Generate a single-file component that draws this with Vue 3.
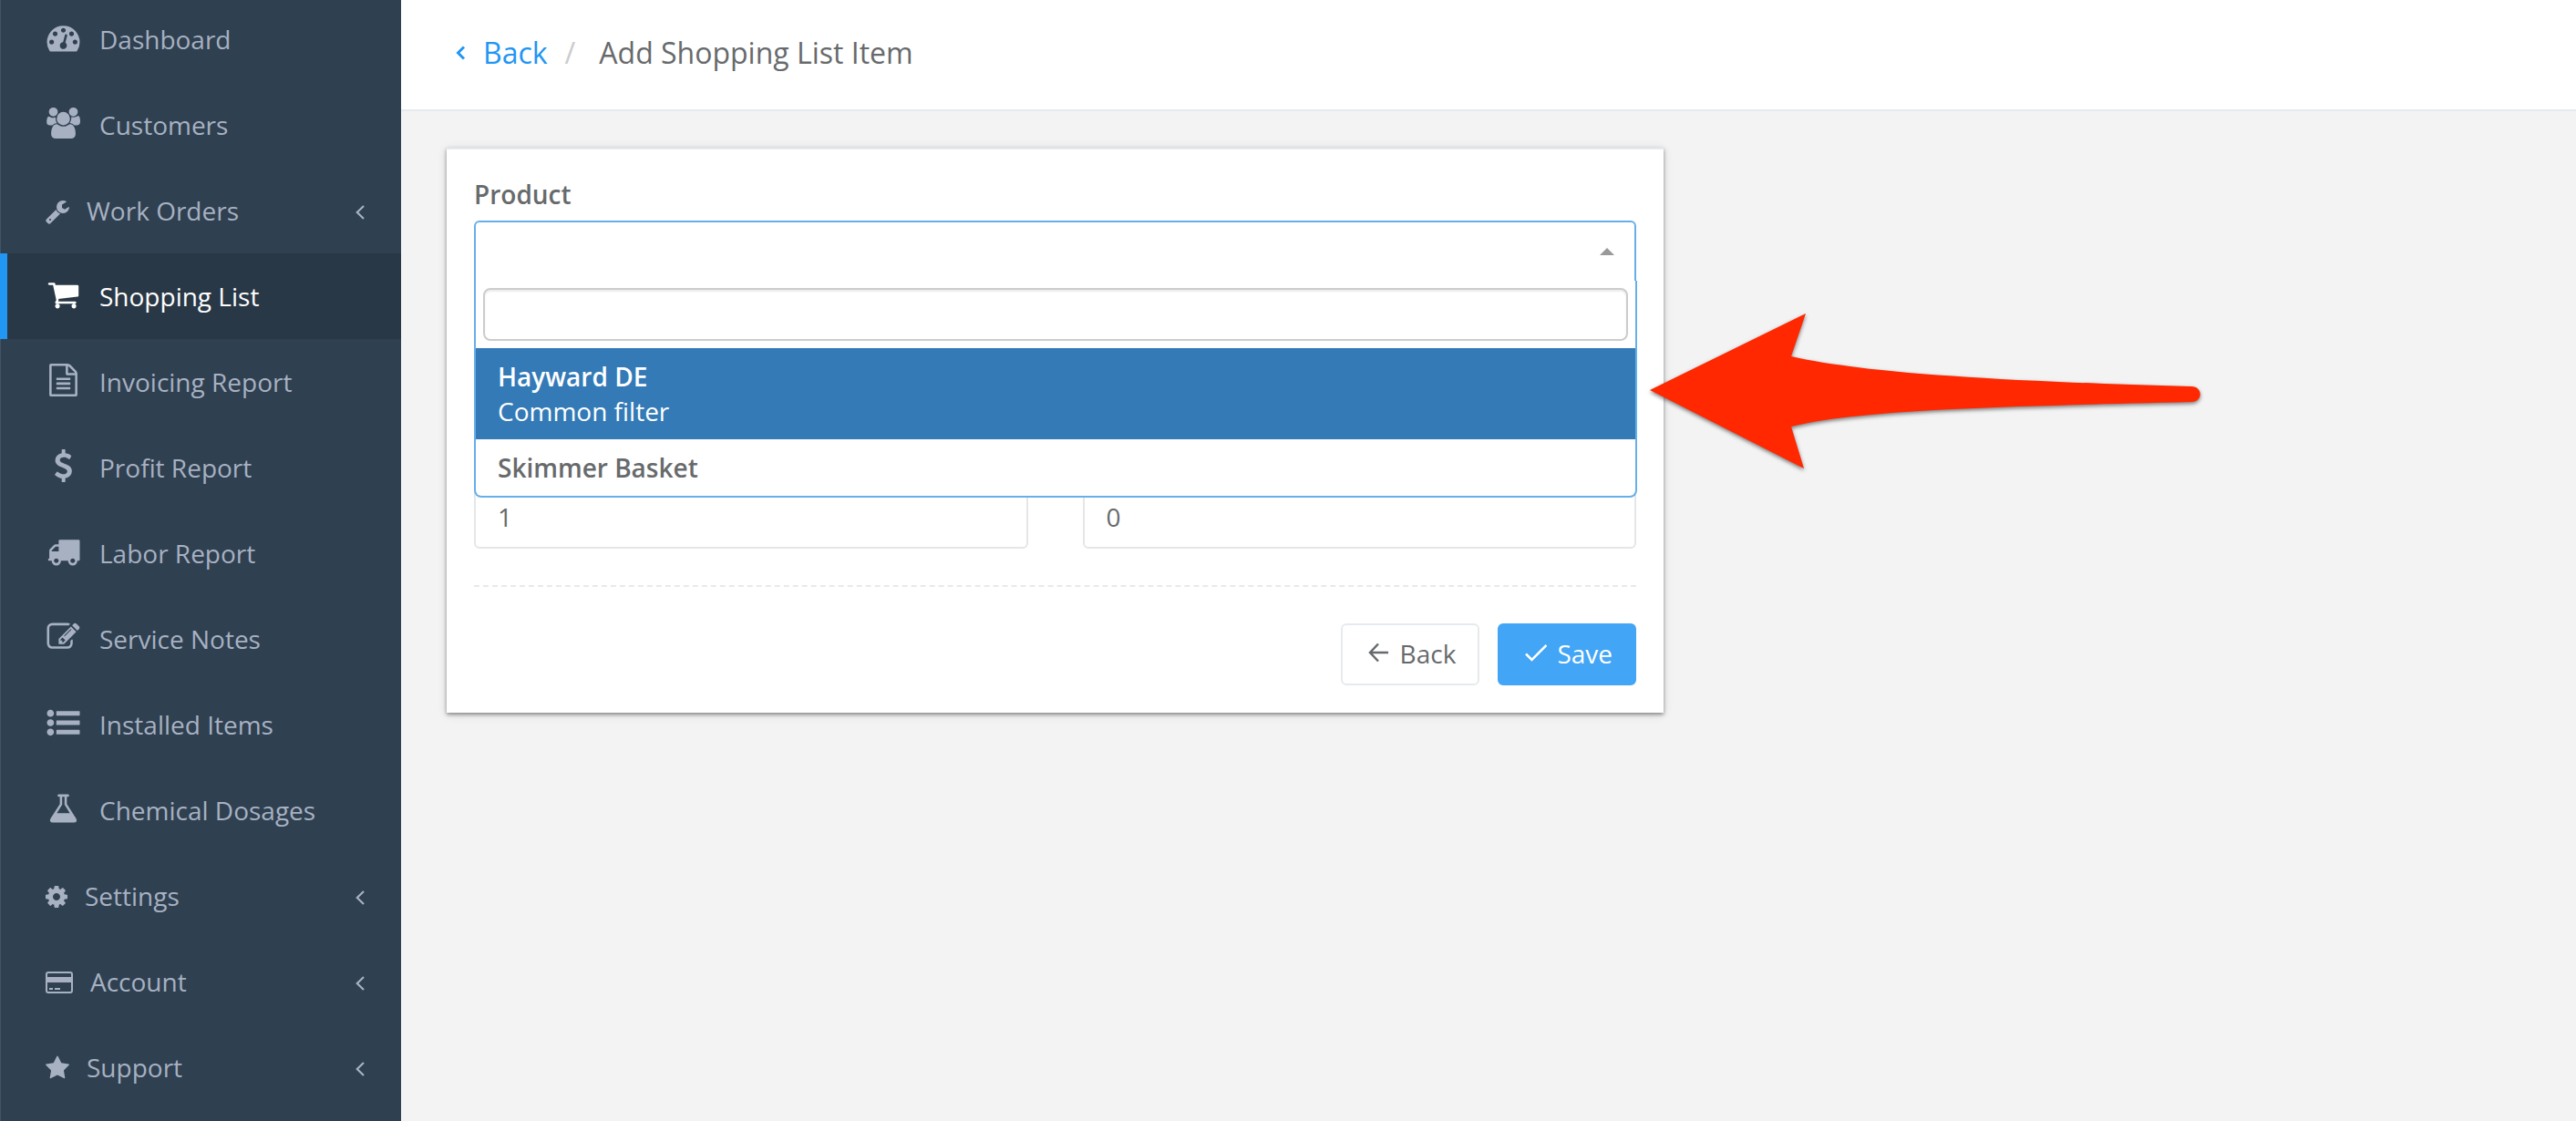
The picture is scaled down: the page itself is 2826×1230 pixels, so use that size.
<template>
  <div class="app">
    <nav class="sidebar" aria-label="Main menu">
      <ul class="menu">
        <li v-for="item in menu" :key="item.label">
          <a href="#" class="menu-link" :class="{ active: item.active }">
            <svg
              v-if="item.card"
              class="icon-small"
              viewBox="0 0 30 28"
              fill="none"
              aria-hidden="true"
            >
              <rect x="1" y="3" width="28" height="22" rx="2" stroke="currentColor" stroke-width="2" />
              <path d="M1 8h28v6H1zM4 20h4v2H4zM10 20h6v2h-6z" fill="currentColor" />
            </svg>
            <svg
              v-else
              :class="item.children ? 'icon-small' : 'icon-large'"
              :viewBox="item.box || '0 0 1792 1792'"
              fill="currentColor"
              aria-hidden="true"
            >
              <path :d="item.path" />
            </svg>
            <span class="menu-label">{{ item.label }}</span>
            <svg v-if="item.children" class="menu-arrow" viewBox="0 0 10 16" aria-hidden="true">
              <path d="M9 1L1.800 8L9 15" fill="none" stroke="currentColor" stroke-width="2.200" />
            </svg>
          </a>
        </li>
      </ul>
    </nav>

    <main class="page">
      <header class="page-header">
        <a href="#" class="crumb-back">
          <svg class="crumb-icon" viewBox="0 0 11 16" aria-hidden="true">
            <path d="M9 1.500L2.500 8L9 14.500" fill="none" stroke="currentColor" stroke-width="3" />
          </svg>
          Back
        </a>
        <span class="crumb-separator">/</span>
        <h1>Add Shopping List Item</h1>
      </header>

      <div class="content">
        <form class="card" @submit.prevent>
          <label id="product-label" class="field-label" for="product">Product</label>
          <div class="product-select">
            <button
              id="product"
              type="button"
              class="select-box"
              aria-haspopup="listbox"
              aria-expanded="true"
              aria-labelledby="product-label"
            >
              <span class="caret"></span>
            </button>
            <div class="dropdown">
              <div class="search">
                <input v-model="search" type="text" aria-label="Search products" />
              </div>
              <ul class="options" role="listbox" aria-labelledby="product-label">
                <li
                  v-for="product in products"
                  :key="product.name"
                  class="option"
                  :class="{ highlighted: product.name === highlighted }"
                  role="option"
                >
                  <strong>{{ product.name }}</strong>
                  <span v-if="product.description">{{ product.description }}</span>
                </li>
              </ul>
            </div>
          </div>

          <div class="amounts">
            <input v-model="quantity" type="text" aria-label="Quantity" />
            <input v-model="price" type="text" aria-label="Price" />
          </div>

          <hr />

          <div class="actions">
            <button type="button" class="btn">
              <svg class="btn-icon" viewBox="0 0 28 28" aria-hidden="true">
                <path d="M26 14H6M15 4.500L6 14L15 23.500" fill="none" stroke="currentColor" stroke-width="2.500" />
              </svg>
              Back
            </button>
            <button type="submit" class="btn btn-primary">
              <svg class="btn-icon" viewBox="0 0 28 28" aria-hidden="true">
                <path d="M5 15.500L11.500 22L27.500 6" fill="none" stroke="currentColor" stroke-width="2.500" />
              </svg>
              Save
            </button>
          </div>
        </form>

        <svg class="pointer" viewBox="0 0 616 180" aria-hidden="true">
          <path
            d="M5 88L176 4L160 51C238 69 388 78 599 84C612 84 612 101 599 101C388 106 238 109 160 128L174 174Z"
            fill="#ff2800"
          />
        </svg>
      </div>
    </main>
  </div>
</template>

<script setup>
import { ref } from 'vue'

const search = ref('')
const quantity = ref('1')
const price = ref('0')
const highlighted = ref('Hayward DE')

const products = [
  { name: 'Hayward DE', description: 'Common filter' },
  { name: 'Skimmer Basket' }
]

const menu = [
  {
    label: 'Dashboard',
    path: 'M384 1152q0-53-37.5-90.5t-90.5-37.5-90.5 37.5-37.5 90.5 37.5 90.5 90.5 37.5 90.5-37.5 37.5-90.5zm192-448q0-53-37.5-90.5t-90.5-37.5-90.5 37.5-37.5 90.5 37.5 90.5 90.5 37.5 90.5-37.5 37.5-90.5zm428 481l101-382q6-26-7.5-48.5t-38.5-29.5-48 6.5-30 39.5l-101 382q-60 5-107 43.5t-63 98.5q-20 77 20 146t117 89 146-20 89-117q16-60-6-117t-72-91zm660-33q0-53-37.5-90.5t-90.5-37.5-90.5 37.5-37.5 90.5 37.5 90.5 90.5 37.5 90.5-37.5 37.5-90.5zm-640-640q0-53-37.5-90.5t-90.5-37.5-90.5 37.5-37.5 90.5 37.5 90.5 90.5 37.5 90.5-37.5 37.5-90.5zm448 192q0-53-37.5-90.5t-90.5-37.5-90.5 37.5-37.5 90.5 37.5 90.5 90.5 37.5 90.5-37.5 37.5-90.5zm320 448q0 261-141 483-19 29-54 29h-1402q-35 0-54-29-141-221-141-483 0-182 71-348t191-286 286-191 348-71 348 71 286 191 191 286 71 348z'
  },
  {
    label: 'Customers',
    box: '0 0 2048 1792',
    path: 'M657 896q-162 5-265 128h-134q-82 0-138-40.5t-56-118.5q0-353 124-353 6 0 43.5 21t97.5 42.5 119 21.5q67 0 133-23-5 37-5 66 0 159 93 287zm1071 637q0 120-73 189.5t-194 69.5h-874q-121 0-194-69.5t-73-189.5q0-53 3.5-103.5t14-109 26.5-108.5 43-97.5 62-81 85.5-53.5 111.5-20q10 0 43 21.5t73 48 107 48 135 21.5 135-21.5 107-48 73-48 43-21.5q61 0 111.5 20t85.5 53.5 62 81 43 97.5 26.5 108.5 14 109 3.5 103.5zm-1024-1277q0 106-75 181t-181 75-181-75-75-181 75-181 181-75 181 75 75 181zm704 384q0 159-112.5 271.5t-271.5 112.5-271.5-112.5-112.5-271.5 112.5-271.5 271.5-112.5 271.5 112.5 112.5 271.5zm576 225q0 78-56 118.5t-138 40.5h-134q-103-123-265-128 93-128 93-287 0-29-5-66 66 23 133 23 59 0 119-21.5t97.5-42.5 43.5-21q124 0 124 353zm-128-609q0 106-75 181t-181 75-181-75-75-181 75-181 181-75 181 75 75 181z'
  },
  {
    label: 'Work Orders',
    children: true,
    box: '64 0 1664 1792',
    path: 'M448 1472q0-26-19-45t-45-19-45 19-19 45 19 45 45 19 45-19 19-45zm644-420l-682 682q-37 37-90 37-52 0-91-37l-106-108q-38-36-38-90 0-53 38-91l681-681q39 98 114.5 173.5t173.5 114.5zm634-435q0 39-23 106-47 134-164.5 217.5t-258.5 83.5q-185 0-316.5-131.5t-131.5-316.5 131.5-316.5 316.5-131.5q58 0 121.5 16.5t107.5 46.5q16 11 16 28t-16 28l-293 169v224l193 107q5-3 79-48.5t135.5-81 70.5-35.5q15 0 23.5 10t8.5 25z'
  },
  {
    label: 'Shopping List',
    active: true,
    path: 'M704 1536q0 52-38 90t-90 38-90-38-38-90 38-90 90-38 90 38 38 90zm896 0q0 52-38 90t-90 38-90-38-38-90 38-90 90-38 90 38 38 90zm128-1088v512q0 24-16.5 42.5t-40.5 21.5l-1044 122q13 60 13 70 0 16-24 64h920q26 0 45 19t19 45-19 45-45 19h-1024q-26 0-45-19t-19-45q0-11 8-31.5t16-36 21.5-40 15.5-29.5l-177-823h-204q-26 0-45-19t-19-45 19-45 45-19h256q16 0 28.5 6.5t19.5 15.5 13 24.5 8 26 5.5 29.5 4.5 26h1201q26 0 45 19t19 45z'
  },
  {
    label: 'Invoicing Report',
    path: 'M1596 380q28 28 48 76t20 88v1152q0 40-28 68t-68 28h-1344q-40 0-68-28t-28-68v-1600q0-40 28-68t68-28h896q40 0 88 20t76 48zm-444-244v376h376q-10-29-22-41l-313-313q-12-12-41-22zm384 1528v-1024h-416q-40 0-68-28t-28-68v-416h-768v1536h1280zm-1024-864q0-14 9-23t23-9h704q14 0 23 9t9 23v64q0 14-9 23t-23 9h-704q-14 0-23-9t-9-23v-64zm736 224q14 0 23 9t9 23v64q0 14-9 23t-23 9h-704q-14 0-23-9t-9-23v-64q0-14 9-23t23-9h704zm0 256q14 0 23 9t9 23v64q0 14-9 23t-23 9h-704q-14 0-23-9t-9-23v-64q0-14 9-23t23-9h704z'
  },
  {
    label: 'Profit Report',
    path: 'M1362 1185q0 153-99.5 263.5t-258.5 136.5v175q0 14-9 23t-23 9h-135q-13 0-22.5-9.5t-9.5-22.5v-175q-66-9-127.5-31t-101.5-44.5-74-48-46.5-37.5-17.5-18q-17-21-2-41l103-135q7-10 23-12 15-2 24 9l2 2q113 99 243 125 37 8 74 8 81 0 142.5-43t61.5-122q0-28-15-53t-33.5-42-58.5-37.5-66-32-80-32.5q-39-16-61.5-25t-61.5-26.5-62.5-31-56.5-35.5-53.5-42.5-43.5-49-35.5-58-21-66.5-8.5-78q0-138 98-242t255-134v-180q0-13 9.5-22.5t22.5-9.5h135q14 0 23 9t9 23v176q57 6 110.5 23t87 33.5 63.5 37.5 39 29 15 14q17 18 5 38l-81 146q-8 15-23 16-14 3-27-7-3-3-14.5-12t-39-26.5-58.5-32-74.5-26-85.5-11.5q-95 0-155 43t-60 111q0 26 8.5 48t29.5 41.5 39.5 33 56 31 60.5 27 70 27.5q53 20 81 31.5t76 35 75.5 42.5 62 50 53 63.5 31.5 76.5 13 94z'
  },
  {
    label: 'Labor Report',
    path: 'M640 1408q0-52-38-90t-90-38-90 38-38 90 38 90 90 38 90-38 38-90zm-384-512h384v-256h-158q-13 0-22 9l-195 195q-9 9-9 22v30zm1280 512q0-52-38-90t-90-38-90 38-38 90 38 90 90 38 90-38 38-90zm256-1088v1024q0 15-4 26.5t-13.5 18.5-16.5 11.5-23.5 6-22.5 2-25.5 0-22.5-.5q0 106-75 181t-181 75-181-75-75-181h-384q0 106-75 181t-181 75-181-75-75-181h-64q-3 0-22.5.5t-25.5 0-22.5-2-23.5-6-16.5-11.5-13.5-18.5-4-26.5q0-26 19-45t45-19v-320q0-8-.5-35t0-38 2.5-34.5 6.5-37 14-30.5 22.5-30l198-198q19-19 50.5-32t58.5-13h160v-192q0-26 19-45t45-19h1024q26 0 45 19t19 45z'
  },
  {
    label: 'Service Notes',
    path: 'M888 1184l116-116-152-152-116 116v56h96v96h56zm440-720q-16-16-33 1l-350 350q-17 17-1 33t33-1l350-350q17-17 1-33zm80 594v190q0 119-84.5 203.5t-203.5 84.5h-832q-119 0-203.5-84.5t-84.5-203.5v-832q0-119 84.5-203.5t203.5-84.5h832q63 0 117 25 15 7 18 23 3 17-9 29l-49 49q-14 14-32 8-23-6-45-6h-832q-66 0-113 47t-47 113v832q0 66 47 113t113 47h832q66 0 113-47t47-113v-126q0-13 9-22l64-64q15-15 35-7t20 29zm-96-738l288 288-672 672h-288v-288zm444 132l-92 92-288-288 92-92q28-28 68-28t68 28l152 152q28 28 28 68t-28 68z'
  },
  {
    label: 'Installed Items',
    path: 'M384 1408q0 80-56 136t-136 56-136-56-56-136 56-136 136-56 136 56 56 136zm0-512q0 80-56 136t-136 56-136-56-56-136 56-136 136-56 136 56 56 136zm1408 416v192q0 13-9.5 22.5t-22.5 9.5h-1216q-13 0-22.5-9.5t-9.5-22.5v-192q0-13 9.5-22.5t22.5-9.5h1216q13 0 22.5 9.5t9.5 22.5zm-1408-928q0 80-56 136t-136 56-136-56-56-136 56-136 136-56 136 56 56 136zm1408 416v192q0 13-9.5 22.5t-22.5 9.5h-1216q-13 0-22.5-9.5t-9.5-22.5v-192q0-13 9.5-22.5t22.5-9.5h1216q13 0 22.5 9.5t9.5 22.5zm0-512v192q0 13-9.5 22.5t-22.5 9.5h-1216q-13 0-22.5-9.5t-9.5-22.5v-192q0-13 9.5-22.5t22.5-9.5h1216q13 0 22.5 9.5t9.5 22.5z'
  },
  {
    label: 'Chemical Dosages',
    path: 'M1591 1448q56 89 21.5 152.5t-140.5 63.5h-1152q-106 0-140.5-63.5t21.5-152.5l503-793v-399h-64q-26 0-45-19t-19-45 19-45 45-19h512q26 0 45 19t19 45-19 45-45 19h-64v399zm-779-725l-272 429h712l-272-429-20-31v-436h-128v436z'
  },
  {
    label: 'Settings',
    children: true,
    box: '128 0 1536 1792',
    path: 'M1152 896q0-106-75-181t-181-75-181 75-75 181 75 181 181 75 181-75 75-181zm512-109v222q0 12-8 23t-20 13l-185 28q-19 54-39 91 35 50 107 138 10 12 10 25t-9 23q-27 37-99 108t-94 71q-12 0-26-9l-138-108q-44 23-91 38-16 136-29 186-7 28-36 28h-222q-14 0-24.5-8.5t-11.5-21.5l-28-184q-49-16-90-37l-141 107q-10 9-25 9-14 0-25-11-126-114-165-168-7-10-7-23 0-12 8-23 15-21 51-66.5t54-70.5q-27-50-41-99l-183-27q-13-2-21-12.5t-8-23.5v-222q0-12 8-23t19-13l186-28q14-46 39-92-40-57-107-138-10-12-10-24 0-10 9-23 26-36 98.5-107.5t94.5-71.5q13 0 26 10l138 107q44-23 91-38 16-136 29-186 7-28 36-28h222q14 0 24.5 8.5t11.5 21.5l28 184q49 16 90 37l142-107q9-9 24-9 13 0 25 10 129 119 165 170 7 8 7 22 0 12-8 23-15 21-51 66.5t-54 70.5q26 50 41 98l183 28q13 2 21 12.5t8 23.5z'
  },
  { label: 'Account', children: true, card: true },
  {
    label: 'Support',
    children: true,
    box: '64 0 1664 1792',
    path: 'M1728 647q0 22-26 48l-363 354 86 500q1 7 1 20 0 21-10.5 35.5t-30.5 14.5q-19 0-40-12l-449-236-449 236q-22 12-40 12-21 0-31.5-14.5t-10.5-35.5q0-6 2-20l86-500-364-354q-25-27-25-48 0-37 56-46l502-73 225-455q19-41 49-41t49 41l225 455 502 73q56 9 56 46z'
  }
]
</script>

<style>
body {
  margin: 0;
  background: #f3f3f3;
}
</style>

<style scoped>
.app {
  display: flex;
  min-height: 100vh;
  font-family: "Open Sans", sans-serif;
  font-size: 28px;
  line-height: 38px;
  color: #676a6c;
}

.app *,
.app *::before {
  box-sizing: border-box;
}

.sidebar {
  flex: none;
  width: 440px;
  height: 100vh;
  overflow: hidden;
  background: #2f4050;
  box-shadow: inset 1px 0 #435363;
}

.menu {
  margin: -4px 0 0;
  padding: 0;
  list-style: none;
}

.menu-link {
  display: flex;
  align-items: center;
  height: 94px;
  padding: 0 40px 0 50px;
  color: #a7b1c2;
  text-decoration: none;
}

.menu-link.active {
  padding-left: 42px;
  border-left: 8px solid #2196f3;
  background: #293846;
  color: #fff;
}

.icon-large {
  width: 39px;
  height: 36px;
  margin: 0 19px 4px 0;
}

.icon-small {
  height: 28px;
  margin: 2px 19px 0 0;
}

.icon-large + .menu-label {
  padding-left: 1px;
}

.menu-label {
  flex: 1;
  white-space: nowrap;
}

.menu-arrow {
  width: 10px;
  height: 16px;
  margin-top: 4px;
}

.page {
  flex: 1;
  min-width: 0;
  background: #f3f3f3;
}

.page-header {
  display: flex;
  align-items: center;
  height: 122px;
  padding: 0 60px 4px;
  border-bottom: 2px solid #e7eaec;
  background: #fff;
  font-size: 32px;
}

.crumb-back {
  display: flex;
  align-items: center;
  gap: 19px;
  color: #2196f3;
  text-decoration: none;
}

.crumb-icon {
  width: 11px;
  height: 16px;
}

.crumb-separator {
  margin: 0 26px 0 19px;
  color: #ccc;
}

.page-header h1 {
  margin: 0;
  font-size: 32px;
  font-weight: 400;
}

.content {
  position: relative;
  padding: 40px 50px;
}

.card {
  width: 58.4%;
  padding: 30px;
  border-top: 2px solid #e7eaec;
  background: #fff;
  box-shadow: 0 2px 4px rgba(0, 0, 0, 0.4), 0 2px 10px rgba(0, 0, 0, 0.12);
}

.field-label {
  display: block;
  margin-bottom: 10px;
  font-weight: 600;
}

.product-select {
  position: relative;
}

.select-box {
  display: flex;
  align-items: center;
  justify-content: flex-end;
  width: 100%;
  height: 68px;
  padding: 0 22px;
  border: 2px solid #66afe9;
  border-radius: 6px 6px 0 0;
  background: #fff;
}

.caret {
  border: 8px solid transparent;
  border-top: 0;
  border-bottom-color: #999;
}

.dropdown {
  position: absolute;
  z-index: 1;
  top: 66px;
  left: 0;
  right: -1px;
  border: 2px solid #66afe9;
  border-top: 0;
  border-radius: 0 0 8px 8px;
  background: #fff;
}

.search {
  padding: 8px;
}

.search input {
  display: block;
  width: 100%;
  height: 58px;
  padding: 0 12px;
  border: 2px solid #ccc;
  border-radius: 8px;
  outline: 0;
  background: #fff;
  box-shadow: inset 0 2px 2px rgba(0, 0, 0, 0.08);
  font: inherit;
  color: inherit;
}

.options {
  margin: 0;
  padding: 0;
  list-style: none;
}

.option {
  display: flex;
  flex-direction: column;
  padding: 12px 24px;
}

.option strong {
  font-weight: 600;
}

.option.highlighted {
  background: #337ab7;
  color: #fff;
}

.amounts {
  display: grid;
  grid-template-columns: 1fr 1fr;
  gap: 60px;
  margin-top: 224px;
}

.amounts input {
  width: 100%;
  height: 68px;
  padding: 0 24px 2px;
  border: 2px solid #e5e6e7;
  border-radius: 6px;
  background: #fff;
  font: inherit;
  color: inherit;
}

hr {
  margin: 40px 0;
  border: 0;
  border-top: 2px dashed #e7eaec;
}

.actions {
  display: flex;
  justify-content: flex-end;
  gap: 20px;
}

.btn {
  display: flex;
  align-items: center;
  gap: 11px;
  height: 68px;
  padding: 0 24px 2px;
  border: 2px solid #e7eaec;
  border-radius: 6px;
  background: #fff;
  font: inherit;
  color: inherit;
}

.btn-primary {
  border-color: #42a5f5;
  background: #42a5f5;
  color: #fff;
}

.btn-icon {
  width: 28px;
  height: 28px;
  margin-bottom: 2px;
}

/* Callout arrow laid over the card edge */
.pointer {
  position: absolute;
  z-index: 2;
  top: 218px;
  left: 1365px;
  width: 616px;
  height: 180px;
  filter: drop-shadow(0 2px 2px rgba(0, 0, 0, 0.5));
}
</style>
